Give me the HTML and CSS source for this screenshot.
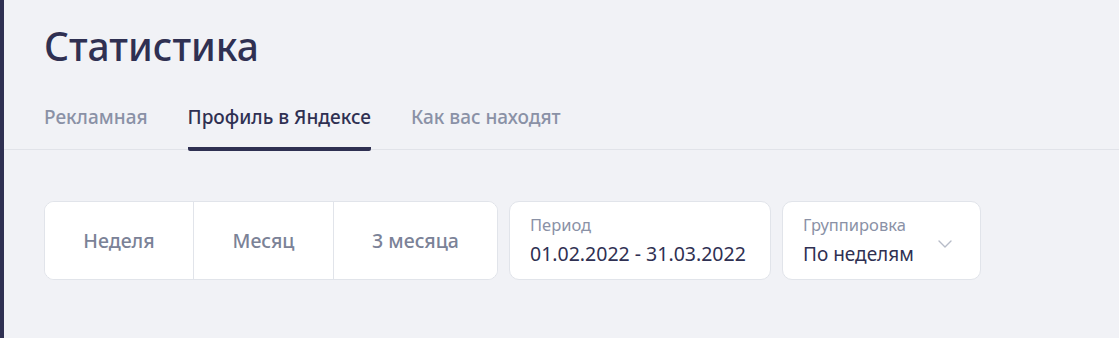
FILE: index.html
```html
<!DOCTYPE html>
<html lang="ru">
<head>
  <meta charset="UTF-8">
  <title>Статистика</title>
  <link rel="stylesheet" href="styles.css">
</head>
<body>
  <div class="page">
    <header class="head">
      <h1 class="title">Статистика</h1>
      <nav class="tabs">
        <a class="tab">Рекламная</a>
        <a class="tab active">Профиль в Яндексе</a>
        <a class="tab">Как вас находят</a>
      </nav>
    </header>

    <div class="filters">
      <div class="segments">
        <button class="seg seg-week">Неделя</button>
        <button class="seg seg-month">Месяц</button>
        <button class="seg seg-3m">3 месяца</button>
      </div>

      <div class="field period">
        <span class="label">Период</span>
        <span class="value">01.02.2022 - 31.03.2022</span>
      </div>

      <div class="field grouping">
        <div class="field-text">
          <span class="label">Группировка</span>
          <span class="value">По неделям</span>
        </div>
        <svg class="chevron" width="14" height="8" viewBox="0 0 14 8">
          <path d="M1 1l6 6 6-6" fill="none" stroke="#b7bcc8" stroke-width="1.4" stroke-linecap="round" stroke-linejoin="round"/>
        </svg>
      </div>
    </div>
  </div>
</body>
</html>
```

FILE: styles.css
```css
body {
  margin: 0;
  background: #f1f2f6;
  font-family: "Noto Sans", "Open Sans", sans-serif;
  color: #2f3052;
}

.page {
  border-left: 4px solid #2f3052;
  min-height: 100vh;
  box-sizing: border-box;
}

.head {
  border-bottom: 1px solid #e1e3e9;
  padding: 0 0 0 40px;
}

.title {
  margin: 0;
  padding-top: 22px;
  font-size: 39px;
  font-weight: 500;
  line-height: 48px;
  color: #2f3052;
}

.tabs {
  display: flex;
  gap: 40px;
  margin-top: 35px;
}

.tab {
  font-size: 19px;
  font-weight: 500;
  color: #8a91a6;
  padding-bottom: 18px;
  border-bottom: 4px solid transparent;
  margin-bottom: -2px;
  line-height: 24px;
  cursor: pointer;
}

.tab.active {
  color: #2f3052;
  border-bottom-color: #2f3052;
  border-radius: 2px;
}

.filters {
  display: flex;
  gap: 11px;
  padding: 51px 0 0 40px;
}

.segments {
  display: flex;
  background: #fff;
  border: 1px solid #e1e4ea;
  border-radius: 10px;
  height: 79px;
  box-sizing: border-box;
  overflow: hidden;
}

.seg {
  border: none;
  background: #fff;
  font-family: inherit;
  font-size: 19.5px;
  font-weight: 500;
  color: #7b8297;
  cursor: pointer;
  border-right: 1px solid #e1e4ea;
}

.seg:last-child {
  border-right: none;
}

.seg-week { width: 149px; }
.seg-month { width: 140px; }
.seg-3m { width: 163px; }

.field {
  background: #fff;
  border: 1px solid #e1e4ea;
  border-radius: 10px;
  height: 79px;
  box-sizing: border-box;
  padding: 12px 20px 0 20px;
}

.period {
  width: 262px;
  display: flex;
  flex-direction: column;
}

.grouping {
  width: 199px;
  display: flex;
  justify-content: space-between;
  padding-right: 0;
}

.field-text {
  display: flex;
  flex-direction: column;
}

.label {
  font-size: 16.5px;
  line-height: 22px;
  color: #8a91a6;
}

.value {
  font-size: 19.5px;
  line-height: 28px;
  margin-top: 4px;
  color: #2f3052;
}

.grouping .value {
  font-size: 19px;
}

.chevron {
  align-self: center;
  margin: -6px 28px 0 0;
}
```
